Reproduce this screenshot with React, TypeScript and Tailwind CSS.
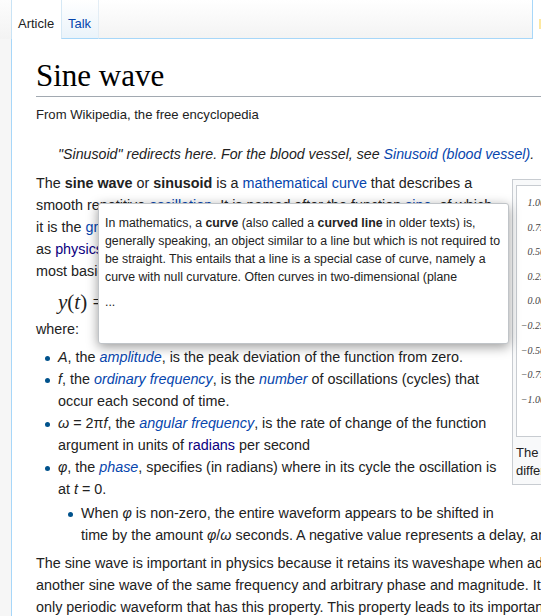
import React from "react";

const A = ({ children, v = false, i = false }: { children: React.ReactNode; v?: boolean; i?: boolean }) => (
  <span className={`${v ? "text-[#0b0080]" : "text-[#0645ad]"} ${i ? "italic" : ""}`}>{children}</span>
);

const Dot = () => (
  <span className="inline-block w-[5px] h-[5px] rounded-full bg-[#00528c] -ml-[13px] mr-[8px] align-middle" />
);

export default function App() {
  const labels = ["1.00", "0.75", "0.50", "0.25", "0.00", "−0.25", "−0.50", "−0.75", "−1.00"];
  return (
    <div className="relative w-[541px] h-[616px] overflow-hidden bg-[#f6f6f6] font-['Liberation_Sans',Arial,sans-serif] text-[#222]">
      {/* tab bar */}
      <div className="flex h-[39px]">
        <div className="w-[11px] shrink-0 bg-gradient-to-b from-[#fdfdfd] to-[#f3f3f3]" />
        <div className="w-[50px] shrink-0 bg-white border-l border-[#c9e3f5] pl-[6px] pt-[15px] text-[13px] leading-[18px] text-[#222]">
          Article
        </div>
        <div className="w-[37px] shrink-0 bg-gradient-to-b from-[#ffffff] to-[#eaf3fa] border-l border-[#d5e8f5] border-b border-b-[#a7d7f9] pl-[6px] pt-[15px] text-[13px] leading-[18px] text-[#0645ad]">
          Talk
        </div>
        <div className="w-[435px] shrink-0 bg-gradient-to-b from-[#ffffff] to-[#f3f3f3] border-l border-[#e3edf5] border-r border-r-[#a7d7f9] border-b border-b-[#a7d7f9]" />
        <div className="flex-1 bg-white pt-[19px] pl-[6px]">
          <div className="w-[3px] h-[10px] bg-[#fde8a0]" />
        </div>
      </div>

      {/* content */}
      <div className="flex">
        <div className="w-[11px] shrink-0 bg-[#f6f6f6]" />
        <div className="w-[900px] shrink-0 bg-white border-l border-[#a7d7f9] pl-[24px] pt-[17px] h-[600px]">
          <div className="w-[800px]">
            <h1 className="font-['Liberation_Serif',serif] text-[31px] leading-[40px] text-black border-b border-[#a2a9b1]">
              Sine wave
            </h1>
            <div className="mt-[8px] text-[13.1px] leading-[20px] text-[#222]">From Wikipedia, the free encyclopedia</div>

            <div className="mt-[18px] pl-[22px] italic text-[14.2px] leading-[22px]">
              "Sinusoid" redirects here. For the blood vessel, see <A>Sinusoid (blood vessel)</A>.
            </div>

            <div className="text-[14.35px] leading-[22px]">
              <div className="float-right w-[400px] -mr-[76px] ml-[12px] mt-[7px] mb-[20px] border border-[#c8ccd1] bg-[#f8f9fa] pt-[5px] px-[3px] pb-[4px]">
                <div className="h-[252px] bg-white border border-[#c8ccd1] flex">
                  <div className="w-[28px] pt-[5px] flex flex-col text-right font-['Liberation_Serif',serif] italic text-[10px] text-[#444]">
                    {labels.map((l) => (
                      <div key={l} className="h-[24.6px] leading-[24.6px]">
                        {l}
                      </div>
                    ))}
                  </div>
                </div>
                <div className="pt-[7px] text-[13px] leading-[18px]">
                  The graphs of the sine and cosine functions are sinusoids of different phases.
                </div>
              </div>

              <p className="mt-[7px]">
                The <b>sine wave</b> or <b>sinusoid</b> is a <A>mathematical curve</A> that describes a smooth repetitive{" "}
                <A>oscillation</A>. It is named after the function <A>sine</A>, of which it is the <A>graph</A>. It
                occurs often in pure and applied mathematics, as well as <A v>physics</A>, <A>engineering</A>,{" "}
                <A>signal processing</A> and many other fields. Its most basic form as a function of time (<i>t</i>) is:
              </p>

              <div className="mt-[6px] pl-[22px] h-[28px] font-['Liberation_Serif',serif] text-[21px] leading-[28px] whitespace-nowrap">
                <i>y</i>(<i>t</i>) = <i>A</i>·sin(2π<i>ft</i> + <i>φ</i>) = <i>A</i>·sin(<i>ωt</i> + <i>φ</i>)
              </div>

              <p className="mt-[2px]">where:</p>

              <ul className="mt-[6px] pl-[22px]">
                <li>
                  <Dot />
                  <i>A</i>, the <A i>amplitude</A>, is the peak deviation of the function from zero.
                </li>
                <li>
                  <Dot />
                  <i>f</i>, the <A i>ordinary frequency</A>, is the <A i>number</A> of oscillations (cycles) that occur each
                  second of time.
                </li>
                <li>
                  <Dot />
                  <i>ω</i> = 2π<i>f</i>, the <A i>angular frequency</A>, is the rate of change of the function argument in
                  units of <A v>radians</A> per second
                </li>
                <li>
                  <Dot />
                  <i>φ</i>, the <A i>phase</A>, specifies (in radians) where in its cycle the oscillation is at <i>t</i> = 0.
                  <ul className="mt-[2px] pl-[23px]">
                    <li>
                      <Dot />
                      When <i>φ</i> is non-zero, the entire waveform appears to be shifted in time by the amount{" "}
                      <i>φ</i>/<i>ω</i> seconds. A negative value represents a delay, and a positive value represents an
                      advance.
                    </li>
                  </ul>
                </li>
              </ul>

              <div className="mt-[6px]">
                <div className="float-right w-[222px] h-[200px] ml-[23px] mt-[7px] border border-[#c8ccd1] bg-[#f8f9fa]" />
                <p>
                  The sine wave is important in physics because it retains its waveshape when added to another sine wave
                  of the same frequency and arbitrary phase and magnitude. It is the only periodic waveform that has this
                  property. This property leads to its importance in Fourier analysis and makes it acoustically unique.
                </p>
              </div>
            </div>
          </div>
        </div>
      </div>

      {/* hover popup */}
      <div className="absolute left-[98px] top-[203px] w-[411px] h-[141px] bg-white border border-[#c0c4c8] rounded-[3px] shadow-[0_3px_12px_rgba(0,0,0,0.4)] pl-[6px] pr-[4px] pt-[10px] text-[12.3px] leading-[18px] text-[#222]">
        <p>
          In mathematics, a <b>curve</b> (also called a <b>curved line</b> in older texts) is, generally speaking, an
          object similar to a line but which is not required to be straight. This entails that a line is a special case
          of curve, namely a curve with null curvature. Often curves in two-dimensional (plane
        </p>
        <p className="mt-[7px]">...</p>
      </div>
    </div>
  );
}
